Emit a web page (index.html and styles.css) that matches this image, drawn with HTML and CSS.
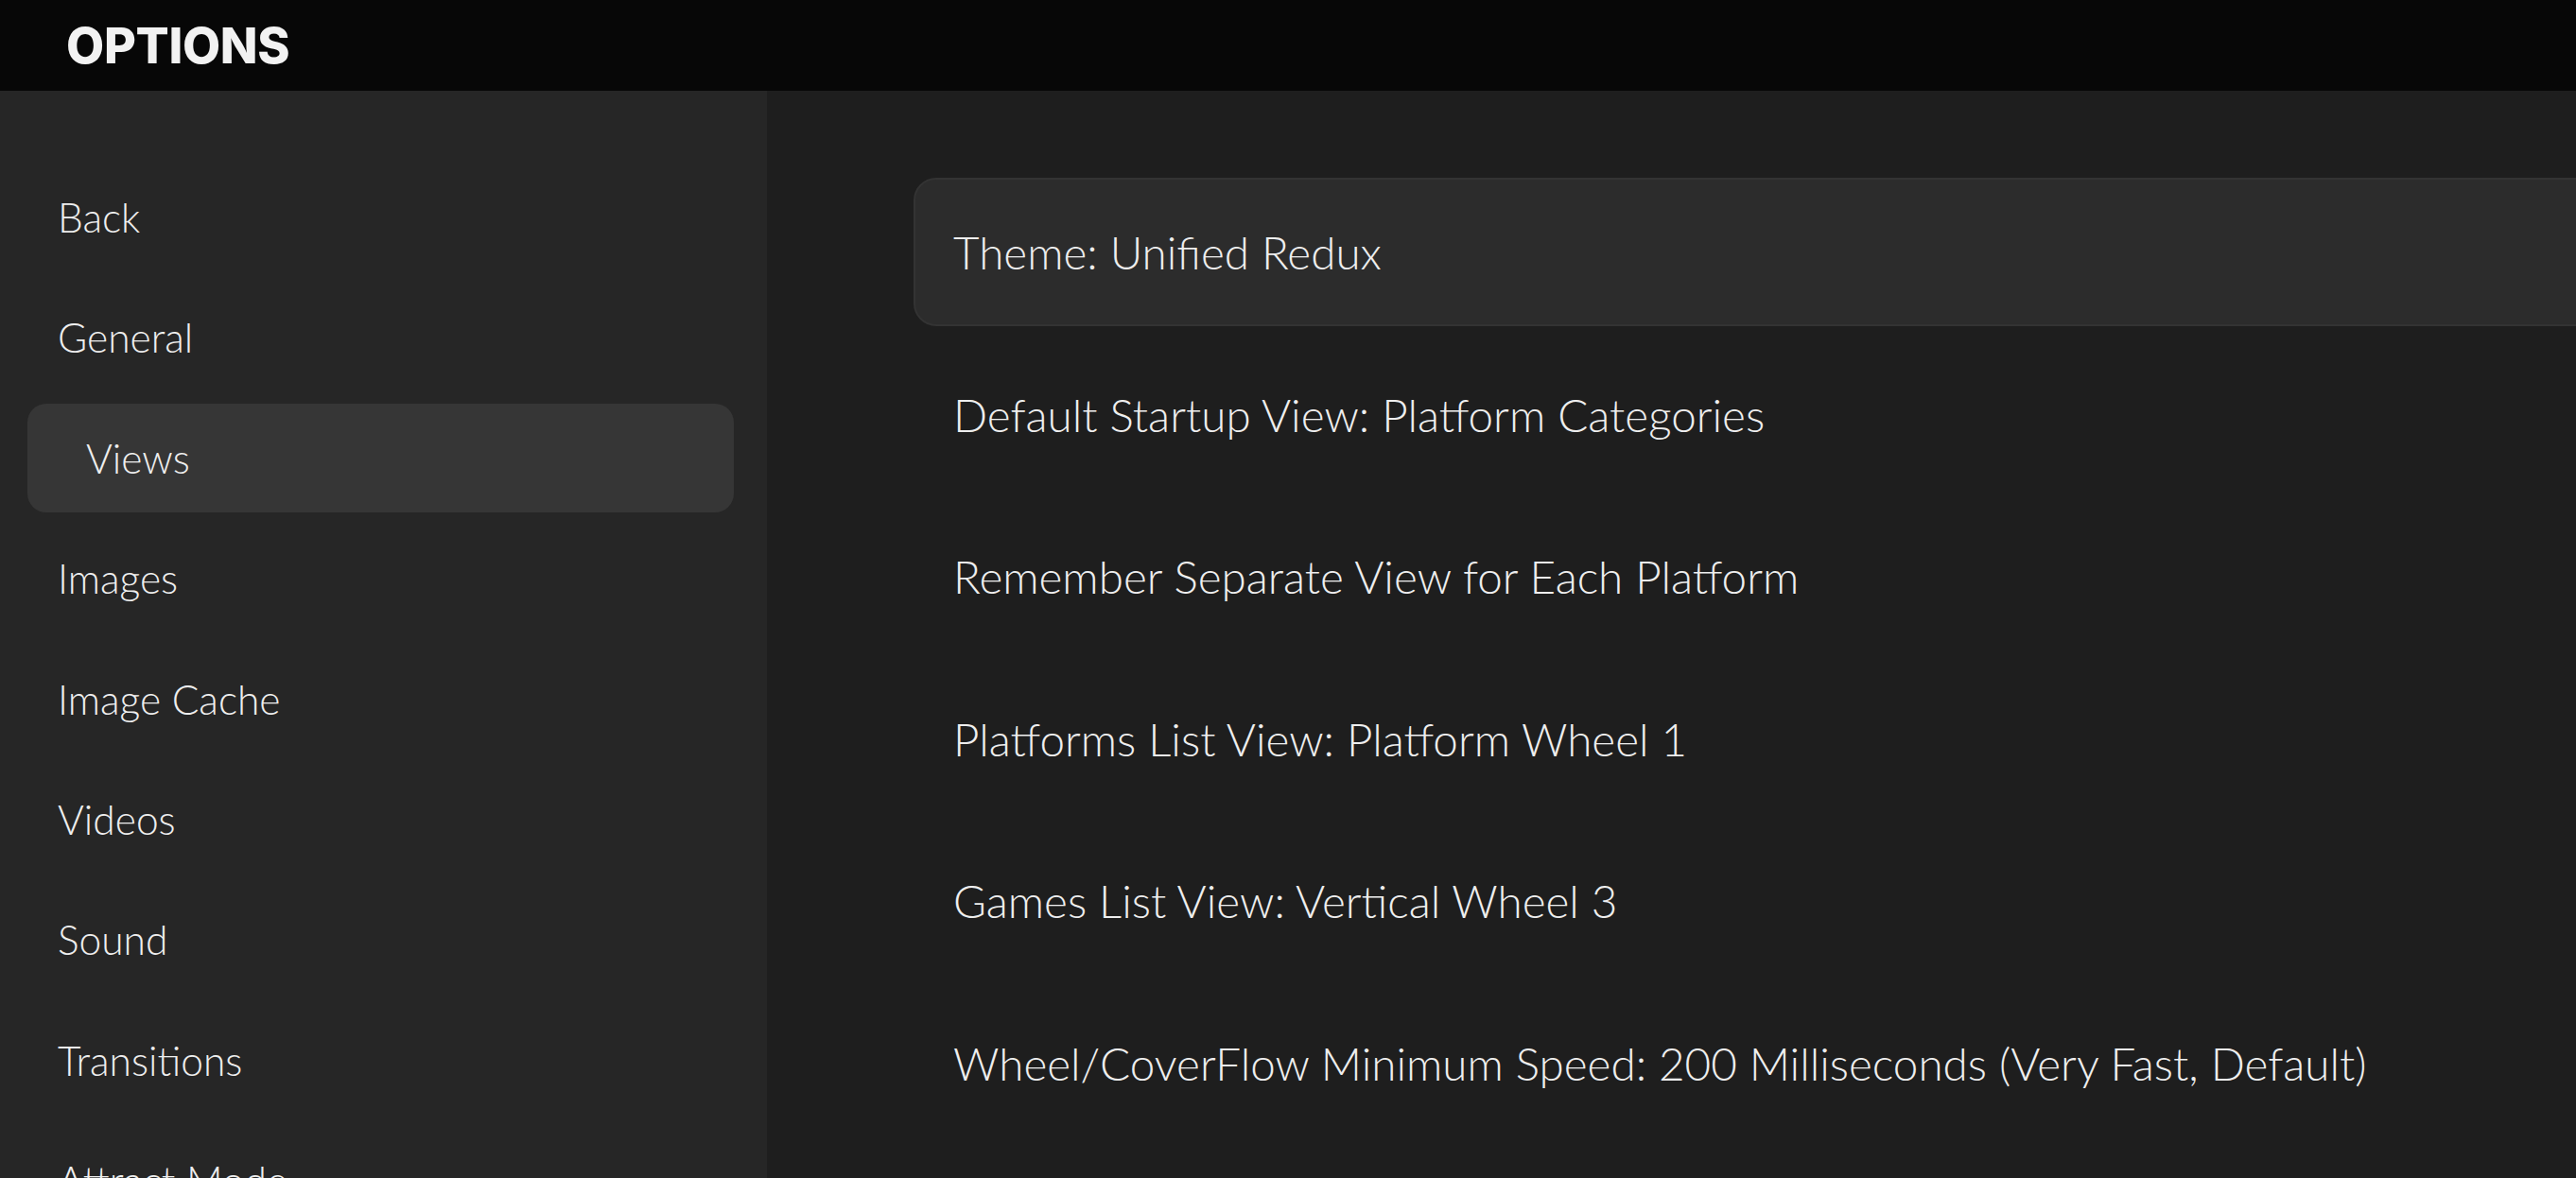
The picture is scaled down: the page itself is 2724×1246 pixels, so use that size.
FILE: index.html
```html
<!DOCTYPE html>
<html lang="en">
<head>
    <meta charset="UTF-8">
    <meta name="viewport" content="width=device-width, initial-scale=1.0">
    <title>Options</title>
    <link rel="stylesheet" href="styles.css">
</head>
<body>
    <header class="topbar">
        <h1 class="title">OPTIONS</h1>
    </header>

    <div class="layout">
        <nav class="sidebar">
            <div class="nav-item">Back</div>
            <div class="nav-item">General</div>
            <div class="nav-item active">Views</div>
            <div class="nav-item">Images</div>
            <div class="nav-item">Image Cache</div>
            <div class="nav-item">Videos</div>
            <div class="nav-item">Sound</div>
            <div class="nav-item">Transitions</div>
            <div class="nav-item">Attract Mode</div>
        </nav>

        <main class="content">
            <ul class="option-list">
                <li class="option selected">Theme: Unified Redux</li>
                <li class="option">Default Startup View: Platform Categories</li>
                <li class="option">Remember Separate View for Each Platform</li>
                <li class="option">Platforms List View: Platform Wheel 1</li>
                <li class="option">Games List View: Vertical Wheel 3</li>
                <li class="option">Wheel/CoverFlow Minimum Speed: 200 Milliseconds (Very Fast, Default)</li>
            </ul>
        </main>
    </div>
</body>
</html>
```

FILE: styles.css
```css
html, body {
    margin: 0;
    height: 100%;
    overflow: hidden;
}

body {
    font-family: Lato, 'Liberation Sans', sans-serif;
    font-weight: 300;
    background: #1e1e1e;
    color: #eeeeee;
    display: flex;
    flex-direction: column;
}

.topbar {
    height: 96px;
    flex-shrink: 0;
    background: #070707;
    display: flex;
    align-items: center;
    padding-left: 70px;
}

.title {
    margin: 0;
    font-family: Inter, 'DejaVu Sans', sans-serif;
    font-weight: 800;
    font-size: 52px;
    letter-spacing: -0.3px;
    color: #f2f2f2;
}

.layout {
    flex: 1;
    display: flex;
    min-height: 0;
}

.sidebar {
    width: 811px;
    flex-shrink: 0;
    box-sizing: border-box;
    background: #262626;
    padding: 76px 35px 0 29px;
    display: flex;
    flex-direction: column;
    gap: 12.4px;
}

.nav-item {
    height: 115px;
    flex-shrink: 0;
    display: flex;
    align-items: center;
    padding-left: 32px;
    font-size: 42.5px;
    border-radius: 20px;
}

.nav-item.active {
    background: #363636;
    padding-left: 62px;
}

.content {
    flex: 1;
    overflow: hidden;
    padding: 92px 0 0 155px;
}

.option-list {
    list-style: none;
    margin: 0 -40px 0 0;
    padding: 0;
    display: flex;
    flex-direction: column;
    gap: 14.6px;
}

.option {
    height: 157px;
    box-sizing: border-box;
    display: flex;
    align-items: center;
    padding-left: 40px;
    font-size: 47.6px;
    border: 2px solid transparent;
    border-radius: 24px;
}

.option.selected {
    background: #2c2c2c;
    border-color: #333333;
}
```
